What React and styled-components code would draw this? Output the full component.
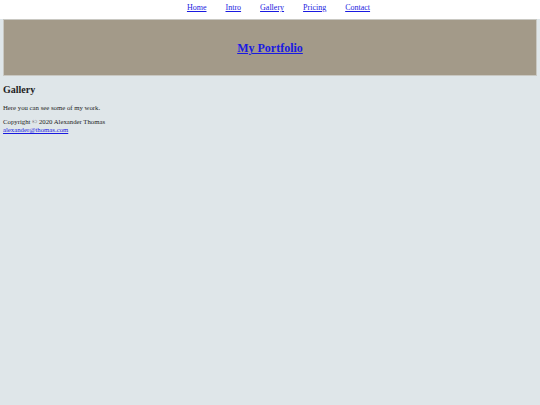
import React from "react";
import styled, { createGlobalStyle } from "styled-components";

const Global = createGlobalStyle`
  html, body { margin: 0; padding: 0; }
  body {
    background: #dfe6e9;
    font-family: "Liberation Serif", "Times New Roman", serif;
    color: #1e1e1e;
    min-height: 405px;
  }
  a, a:visited { color: #1a1ae0; }
`;

const Nav = styled.nav`
  background: #ffffff;
  height: 19px;
  box-sizing: border-box;
  padding: 3px 0 0 17px;
  display: flex;
  justify-content: center;
  align-items: flex-start;
  gap: 19px;
  font-size: 8px;
`;

const NavLink = styled.a`
  line-height: 9px;
`;

const Header = styled.header`
  margin: 0 3px;
  height: 55px;
  background: #a39a89;
  border: 1px solid #c9c8c2;
  display: flex;
  align-items: center;
  justify-content: center;
`;

const Title = styled.h1`
  margin: 2px 0 0;
  font-size: 12px;
  font-weight: bold;
`;

const Main = styled.main`
  padding: 0 3px;
`;

const Heading = styled.h2`
  margin: 8px 0 0;
  font-size: 10px;
  line-height: 12px;
`;

const Para = styled.p`
  margin: 8px 0 0;
  font-size: 6.75px;
  line-height: 8px;
`;

const Footer = styled.footer`
  margin-top: 6px;
  font-size: 6.75px;
  line-height: 8px;
  display: flex;
  flex-direction: column;
  align-items: flex-start;
`;

export default function App() {
  return (
    <>
      <Global />
      <Nav>
        <NavLink href="#home">Home</NavLink>
        <NavLink href="#intro">Intro</NavLink>
        <NavLink href="#gallery">Gallery</NavLink>
        <NavLink href="#pricing">Pricing</NavLink>
        <NavLink href="#contact">Contact</NavLink>
      </Nav>
      <Header>
        <Title>
          <a href="#home">My Portfolio</a>
        </Title>
      </Header>
      <Main>
        <Heading>Gallery</Heading>
        <Para>Here you can see some of my work.</Para>
        <Footer>
          <span>Copyright © 2020 Alexander Thomas</span>
          <a href="mailto:alexander@thomas.com">alexander@thomas.com</a>
        </Footer>
      </Main>
    </>
  );
}
